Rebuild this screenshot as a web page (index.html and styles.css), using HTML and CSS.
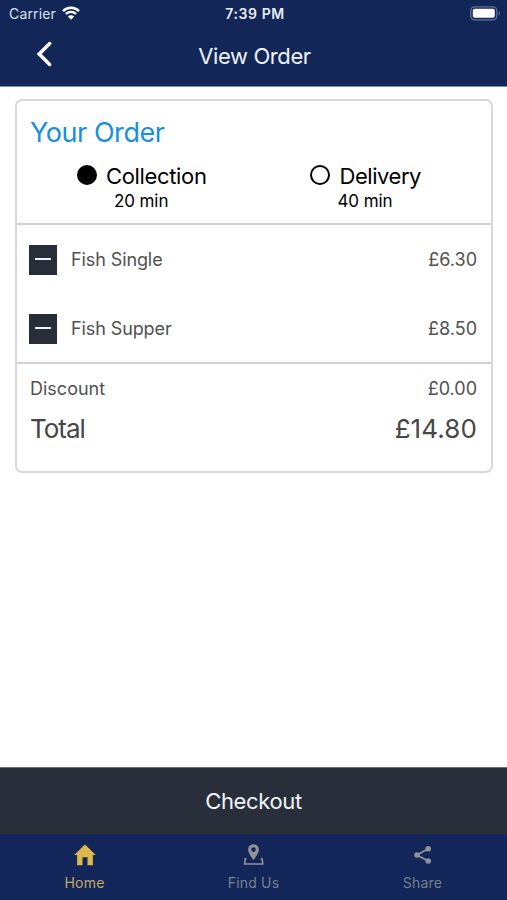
FILE: index.html
```html
<!DOCTYPE html>
<html lang="en">
<head>
<meta charset="utf-8">
<title>View Order</title>
<link rel="stylesheet" href="styles.css">
</head>
<body>
<div class="screen">
  <header class="header">
    <div class="status">
      <div class="carrier"><span class="carrier-name">Carrier</span>
        <svg class="wifi" viewBox="0 0 18 14" width="18" height="14"><path d="M1 5.1C5.4.6 12.6.6 17 5.1M3.9 8c2.8-2.8 7.4-2.8 10.2 0" fill="none" stroke="#fff" stroke-width="2.4"/><path d="M9 13.7 5.9 10.5c1.7-1.6 4.5-1.6 6.2 0z" fill="#fff"/></svg>
      </div>
      <span class="clock">7:39 PM</span>
      <svg class="battery" viewBox="0 0 31 15" width="31" height="15"><rect x=".8" y=".8" width="26" height="13" rx="3.8" fill="none" stroke="#62719a" stroke-width="1.3"/><rect x="2.8" y="2.8" width="22" height="9" rx="1.8" fill="#fff"/><path d="M28.6 5.2c2 .8 2 3.6 0 4.4z" fill="#62719a"/></svg>
    </div>
    <div class="nav">
      <svg class="back" viewBox="0 0 18 26" width="18" height="26"><path d="M13.7 2.6 3.2 13l10.5 10.4" fill="none" stroke="#fff" stroke-width="3.5" stroke-linecap="round" stroke-linejoin="miter"/></svg>
      <h1 class="title">View Order</h1>
      <span></span>
    </div>
  </header>
  <main class="content">
    <section class="card">
      <div class="summary">
        <h2 class="heading"><span>Your Order</span></h2>
        <div class="options">
          <div class="option collection"><div class="choice"><i class="radio selected"></i><span>Collection</span></div><span class="time">20 min</span></div>
          <div class="option delivery"><div class="choice"><i class="radio"></i><span>Delivery</span></div><span class="time">40 min</span></div>
        </div>
      </div>
      <div class="items">
        <div class="item"><button class="remove" aria-label="Remove"></button><span class="item-name">Fish Single</span><span class="price">£6.30</span></div>
        <div class="item"><button class="remove" aria-label="Remove"></button><span class="item-name">Fish Supper</span><span class="price">£8.50</span></div>
      </div>
      <div class="totals">
        <div class="row discount"><span>Discount</span><span class="price">£0.00</span></div>
        <div class="row total"><span class="total-label">Total</span><span class="total-price">£14.80</span></div>
      </div>
    </section>
  </main>
  <button class="checkout"><span>Checkout</span></button>
  <nav class="tabs">
    <div class="tab active"><svg viewBox="0 0 24 24" width="24" height="24"><path d="M12 1.5 1.2 12h2.9v10.2h5.4v-8h5v8h5.4V12h2.9z" fill="#ddb74b"/></svg><span class="tab-home">Home</span></div>
    <div class="tab"><svg viewBox="0 0 24 24" width="24" height="24"><path fill-rule="evenodd" d="M11.5 1.3c-3.1 0-5.4 2.3-5.4 5.3 0 3.7 5.4 10.5 5.4 10.5s5.4-6.8 5.4-10.5c0-3-2.3-5.3-5.4-5.3zm0 3a2.3 2.3 0 1 1 0 4.6 2.3 2.3 0 0 1 0-4.6z" fill="#929297"/><path d="M4.6 15.9H3.3L2.6 21h18.2l-.7-5.1h-1.3" fill="none" stroke="#929297" stroke-width="1.6"/></svg><span class="tab-find">Find Us</span></div>
    <div class="tab"><svg viewBox="0 0 24 24" width="24" height="24"><path d="M17.2 5.7 6 12l11.2 6" fill="none" stroke="#929297" stroke-width="1.8"/><g fill="#929297"><circle cx="17.2" cy="5.7" r="2.8"/><circle cx="6" cy="12" r="2.8"/><circle cx="17.2" cy="18" r="2.8"/></g></svg><span class="tab-share">Share</span></div>
  </nav>
</div>
</body>
</html>
```
FILE: styles.css
```css
* { box-sizing: border-box; }
body { margin: 0; background: #fff; font-family: Inter, "Liberation Sans", sans-serif; color: #000; }
button { border: 0; padding: 0; margin: 0; font: inherit; }
h1, h2 { margin: 0; font-weight: 400; }
svg { display: block; flex: none; }
.screen { height: 900px; display: flex; flex-direction: column; }
.header { height: 87px; background: #122757; border-bottom: 1px solid #7c89a6; color: #fff; }
.status { height: 27px; padding: 0 6px 0 9px; display: grid; grid-template-columns: 1fr auto 1fr; align-items: center; font-size: 14px; }
.carrier { display: flex; align-items: center; gap: 6px; color: #dce2ef; }
.carrier-name { letter-spacing: .15px; }
.wifi { margin-top: -1px; }
.clock { font-weight: 600; font-size: 14px; letter-spacing: .6px; color: #e9edf6; }
.battery { justify-self: end; }
.nav { height: 58px; display: grid; grid-template-columns: 1fr auto 1fr; align-items: center; }
.back { margin-left: 36px; margin-top: -4px; }
.title { font-size: 22px; letter-spacing: -.4px; color: #eef2fb; padding-left: 2px; }
.content { flex: 1; padding: 12px 14px 0 15px; }
.card { height: 374px; border: 2px solid #d8d8d8; border-radius: 7px; }
.summary { height: 124px; padding-top: 15px; border-bottom: 2px solid #d2d2d2; }
.heading { font-size: 27px; line-height: 34px; letter-spacing: -.45px; color: #168fdf; padding-left: 13px; }
.options { display: flex; justify-content: space-between; padding: 11px 70px 0 60px; }
.option { display: flex; flex-direction: column; }
.choice { display: flex; align-items: center; gap: 9px; font-size: 22px; line-height: 30px; letter-spacing: -.35px; }
.delivery .choice { letter-spacing: -.45px; }
.radio { width: 20px; height: 20px; margin-top: -2px; border: 2px solid #000; border-radius: 50%; }
.selected { background: #000; }
.time { font-size: 17px; line-height: 20px; letter-spacing: -.1px; }
.collection .time { padding-left: 37px; }
.delivery .time { padding-left: 27px; }
.items { height: 139px; border-bottom: 2px solid #d2d2d2; color: #505050; font-size: 18px; }
.item { height: 69px; padding: 0 14px 0 12px; display: flex; align-items: center; }
.remove { width: 28px; height: 30px; background: #272e39; display: flex; justify-content: center; padding-top: 13px; }
.remove::before { content: ""; width: 16px; height: 2px; background: #f1f5fb; }
.item-name { margin-left: 14px; letter-spacing: -.1px; }
.price { margin-left: auto; }
.totals { padding: 12px 14px 0 13px; color: #464646; }
.row { display: flex; justify-content: space-between; align-items: center; }
.discount { height: 24px; font-size: 18px; color: #505050; }
.total { height: 57px; font-size: 26px; }
.total-label { letter-spacing: -1px; }
.total-price { letter-spacing: .1px; }
.checkout { width: 100%; height: 67px; background: #292f3a; border-top: 1px solid #69706f; color: #f1f5fb; font-size: 22px; letter-spacing: -.35px; }
.tabs { height: 66px; background: #122659; display: flex; }
.tab { flex: 1; display: flex; flex-direction: column; align-items: center; padding-top: 9px; color: #77808d; font-size: 14px; }
.tab span { line-height: 20px; margin-top: 6px; letter-spacing: .2px; }
.active { color: #c4aa63; }
```
